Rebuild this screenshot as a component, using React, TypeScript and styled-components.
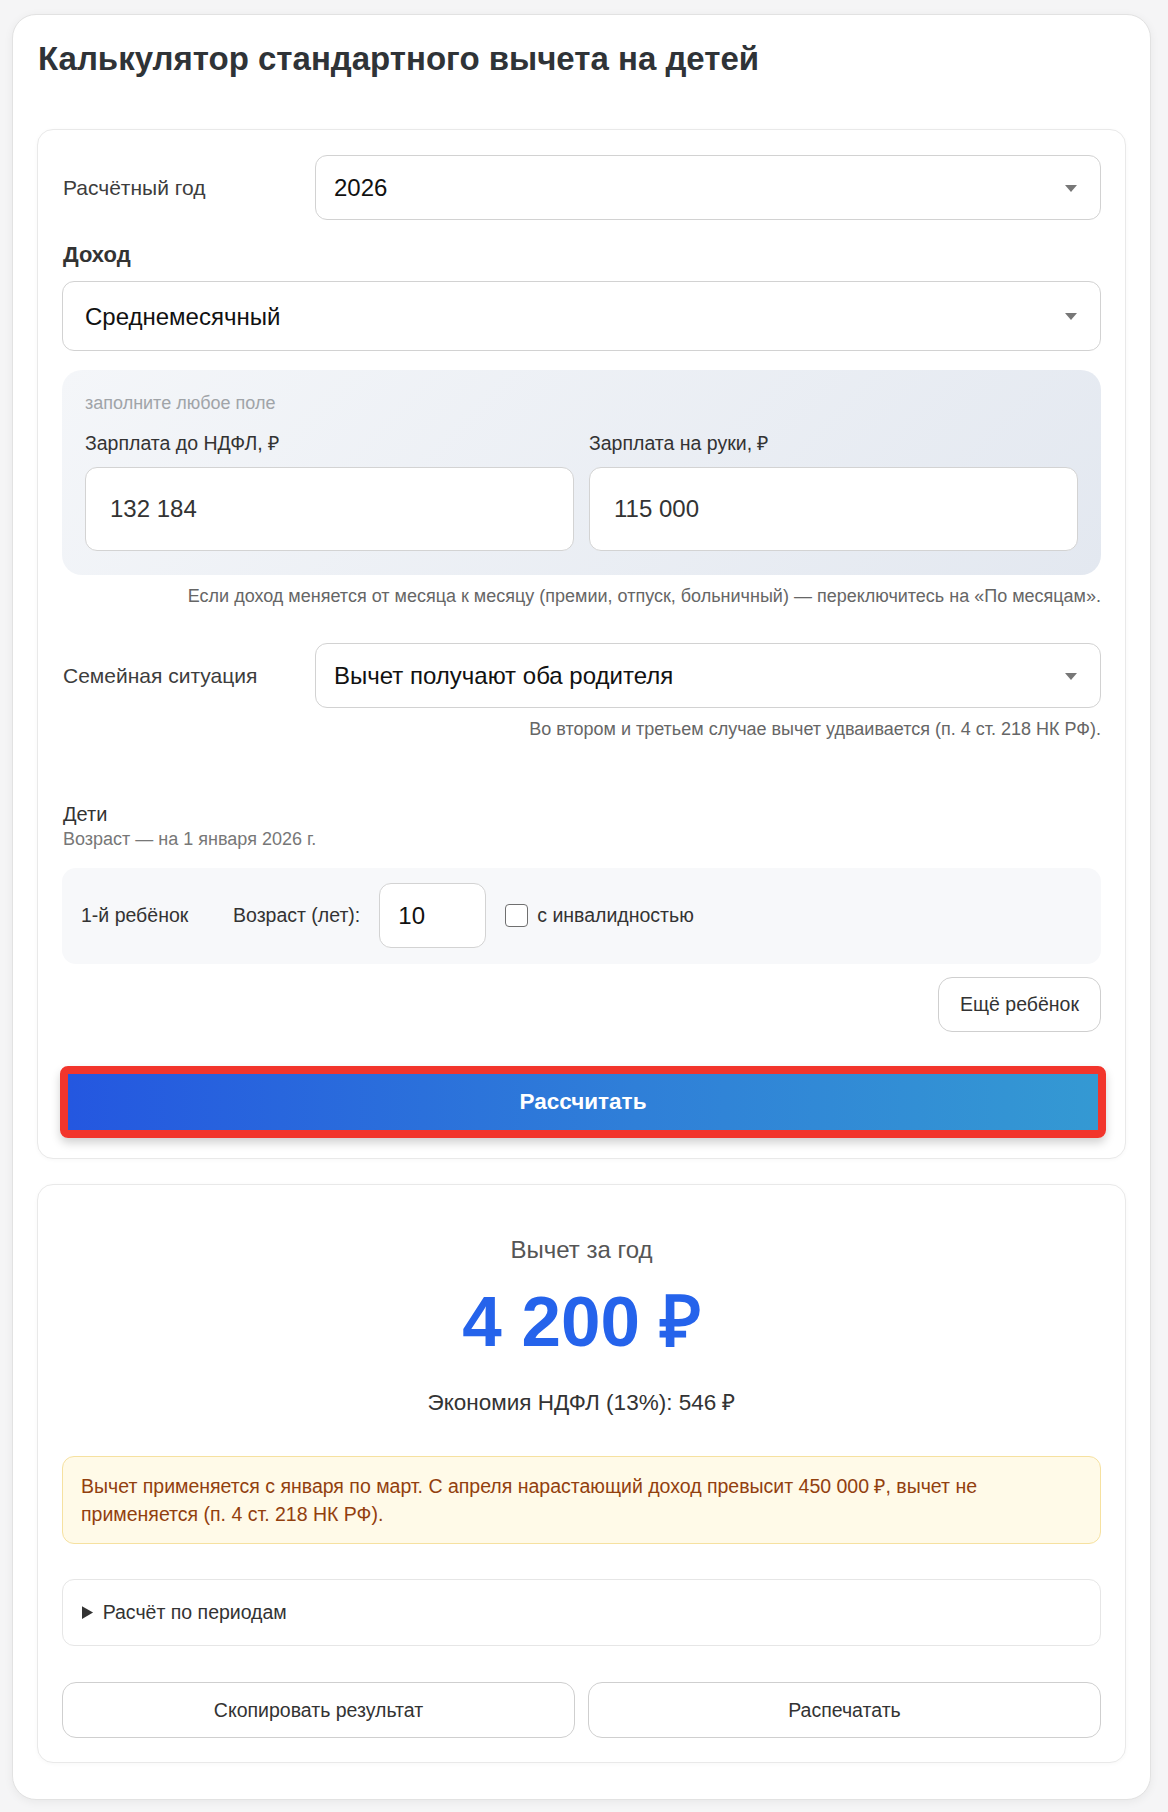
import React from 'react';
import styled, { createGlobalStyle } from 'styled-components';

const GlobalStyle = createGlobalStyle`
  html, body {
    margin: 0;
    padding: 0;
    background: #f5f5f6;
  }
  body {
    font-family: "Liberation Sans", Arial, sans-serif;
    color: #333;
  }
  * {
    box-sizing: border-box;
  }
`;

const Page = styled.div`
  padding: 14px 17px 12px 12px;
`;

const Shell = styled.div`
  background: #fff;
  border: 1px solid #e2e2e2;
  border-radius: 24px;
  box-shadow: 0 2px 10px rgba(0, 0, 0, 0.06);
  padding: 25px 24px 36px;
`;

const Title = styled.h1`
  margin: 0 0 51px 1px;
  font-size: 33px;
  line-height: 38px;
  font-weight: 700;
  color: #2f3337;
`;

const Card = styled.section<{ $result?: boolean }>`
  background: #fff;
  border: 1px solid #e9e9e9;
  border-radius: 16px;
  box-shadow: 0 1px 4px rgba(0, 0, 0, 0.03);
  padding: ${p => (p.$result ? '51px 24px 24px' : '25px 24px 20px')};
  margin-top: ${p => (p.$result ? '25px' : '0')};
`;

const FieldRow = styled.div<{ $top?: number }>`
  display: flex;
  align-items: center;
  gap: 13px;
  margin-top: ${p => p.$top ?? 0}px;
`;

const RowLabel = styled.label`
  flex: 0 0 240px;
  font-size: 21px;
  color: #3d3d3d;
  padding-left: 1px;
`;

const SelectWrap = styled.div`
  position: relative;
  flex: 1;

  &::after {
    content: '';
    position: absolute;
    right: 24px;
    top: 50%;
    margin-top: -3px;
    border-left: 6px solid transparent;
    border-right: 6px solid transparent;
    border-top: 7px solid #777;
    pointer-events: none;
  }
`;

const Select = styled.select<{ $tall?: boolean }>`
  appearance: none;
  -webkit-appearance: none;
  width: 100%;
  height: ${p => (p.$tall ? '70px' : '65px')};
  padding: 0 48px 0 ${p => (p.$tall ? '22px' : '18px')};
  border: 1px solid #d2d2d2;
  border-radius: 12px;
  background: #fff;
  font-family: inherit;
  font-size: 24px;
  color: #111;
  outline: none;
`;

const SectionTitle = styled.div`
  margin: 23px 0 15px 1px;
  font-size: 22px;
  line-height: 23px;
  font-weight: 700;
  color: #333;
`;

const SalaryPanel = styled.div`
  margin-top: 19px;
  padding: 23px 23px 24px;
  border-radius: 20px;
  background: linear-gradient(135deg, #f4f6f9 0%, #e3e8f0 100%);
`;

const PanelNote = styled.div`
  font-size: 18px;
  line-height: 21px;
  color: #a0a4a8;
  margin-bottom: 18px;
`;

const SalaryGrid = styled.div`
  display: grid;
  grid-template-columns: 1fr 1fr;
  gap: 15px;
`;

const SalaryField = styled.div`
  display: flex;
  flex-direction: column;
`;

const FieldCaption = styled.label`
  font-size: 19.5px;
  line-height: 23px;
  color: #333;
  margin-bottom: 12px;
`;

const MoneyInput = styled.input`
  height: 84px;
  width: 100%;
  padding: 0 24px;
  border: 1px solid #d3d3d3;
  border-radius: 12px;
  background: #fff;
  font-family: inherit;
  font-size: 24px;
  color: #333;
  outline: none;
`;

const Hint = styled.p`
  margin: 11px 0 0;
  text-align: right;
  font-size: 18px;
  line-height: 21px;
  color: #666;
`;

const ChildrenHead = styled.div`
  margin-top: 63px;
  padding-left: 1px;
  font-size: 20px;
  line-height: 23px;
  color: #333;
`;

const ChildrenSub = styled.div`
  margin-top: 3px;
  padding-left: 1px;
  font-size: 18px;
  line-height: 21px;
  color: #777;
`;

const ChildRow = styled.div`
  margin-top: 18px;
  display: flex;
  align-items: center;
  gap: 19px;
  padding: 15px 19px 16px;
  border-radius: 14px;
  background: #f7f8fa;
`;

const ChildName = styled.span`
  flex: 0 0 133px;
  font-size: 19.5px;
  color: #333;
`;

const AgeLabel = styled.label`
  font-size: 19.5px;
  color: #333;
`;

const AgeInput = styled.input`
  width: 107px;
  height: 65px;
  padding: 0 18px;
  border: 1px solid #d3d3d3;
  border-radius: 12px;
  background: #fff;
  font-family: inherit;
  font-size: 24px;
  color: #111;
  outline: none;
`;

const CheckLabel = styled.label`
  display: flex;
  align-items: center;
  gap: 9px;
  font-size: 19.5px;
  color: #333;
`;

const CheckBox = styled.input`
  appearance: none;
  -webkit-appearance: none;
  width: 23px;
  height: 23px;
  margin: 0;
  border: 1.5px solid #6f6f6f;
  border-radius: 4px;
  background: #fff;
`;

const AddRow = styled.div`
  margin-top: 13px;
  display: flex;
  justify-content: flex-end;
`;

const GhostButton = styled.button<{ $wide?: boolean }>`
  height: ${p => (p.$wide ? '56px' : '55px')};
  padding: 0 21px;
  border: 1px solid #cfcfcf;
  border-radius: 14px;
  background: #fff;
  font-family: inherit;
  font-size: 19.5px;
  color: #333;
  cursor: pointer;
`;

const CalcButton = styled.button`
  display: block;
  width: calc(100% + 7px);
  height: 72px;
  margin: 34px 0 0 -2px;
  border: 8px solid #f2352c;
  border-radius: 8px;
  background: linear-gradient(90deg, #2457e0 0%, #2f7fd8 55%, #3499d3 100%);
  box-shadow: 0 5px 10px rgba(0, 0, 0, 0.18);
  font-family: inherit;
  font-size: 22.5px;
  font-weight: 700;
  color: #fff;
  cursor: pointer;
`;

const ResultCaption = styled.div`
  text-align: center;
  font-size: 24px;
  line-height: 28px;
  color: #555;
`;

const ResultValue = styled.div`
  margin-top: 18px;
  text-align: center;
  font-size: 71px;
  line-height: 80px;
  font-weight: 700;
  color: #2563eb;
`;

const ResultSaving = styled.div`
  margin-top: 28px;
  text-align: center;
  font-size: 22.5px;
  line-height: 26px;
  color: #333;
`;

const Warning = styled.div`
  margin-top: 40px;
  padding: 15px 18px;
  border: 1px solid #f6e1a0;
  border-radius: 12px;
  background: #fffae8;
  font-size: 19.5px;
  line-height: 28px;
  color: #92400e;
`;

const Periods = styled.details`
  margin-top: 35px;
  border: 1px solid #e6e6e6;
  border-radius: 12px;
  background: #fff;
`;

const PeriodsSummary = styled.summary`
  padding: 20px 19px 21px;
  font-size: 19.5px;
  line-height: 24px;
  color: #333;
  cursor: pointer;
`;

const ActionGrid = styled.div`
  margin-top: 36px;
  display: grid;
  grid-template-columns: 1fr 1fr;
  gap: 13px;
`;

const App: React.FC = () => {
  return (
    <>
      <GlobalStyle />
      <Page>
        <Shell>
          <Title>Калькулятор стандартного вычета на детей</Title>

          <Card>
            <FieldRow>
              <RowLabel>Расчётный год</RowLabel>
              <SelectWrap>
                <Select defaultValue="2026">
                  <option value="2025">2025</option>
                  <option value="2026">2026</option>
                </Select>
              </SelectWrap>
            </FieldRow>

            <SectionTitle>Доход</SectionTitle>
            <SelectWrap>
              <Select $tall defaultValue="avg">
                <option value="avg">Среднемесячный</option>
                <option value="monthly">По месяцам</option>
              </Select>
            </SelectWrap>

            <SalaryPanel>
              <PanelNote>заполните любое поле</PanelNote>
              <SalaryGrid>
                <SalaryField>
                  <FieldCaption>Зарплата до НДФЛ, ₽</FieldCaption>
                  <MoneyInput defaultValue="132 184" />
                </SalaryField>
                <SalaryField>
                  <FieldCaption>Зарплата на руки, ₽</FieldCaption>
                  <MoneyInput defaultValue="115 000" />
                </SalaryField>
              </SalaryGrid>
            </SalaryPanel>
            <Hint>
              Если доход меняется от месяца к месяцу (премии, отпуск, больничный) — переключитесь на «По месяцам».
            </Hint>

            <FieldRow $top={36}>
              <RowLabel>Семейная ситуация</RowLabel>
              <SelectWrap>
                <Select defaultValue="both">
                  <option value="both">Вычет получают оба родителя</option>
                  <option value="single">Единственный родитель</option>
                  <option value="refuse">Второй родитель отказался от вычета</option>
                </Select>
              </SelectWrap>
            </FieldRow>
            <Hint>Во втором и третьем случае вычет удваивается (п. 4 ст. 218 НК РФ).</Hint>

            <ChildrenHead>Дети</ChildrenHead>
            <ChildrenSub>Возраст — на 1 января 2026 г.</ChildrenSub>

            <ChildRow>
              <ChildName>1-й ребёнок</ChildName>
              <AgeLabel>Возраст (лет):</AgeLabel>
              <AgeInput defaultValue="10" />
              <CheckLabel>
                <CheckBox type="checkbox" />
                с инвалидностью
              </CheckLabel>
            </ChildRow>

            <AddRow>
              <GhostButton type="button">Ещё ребёнок</GhostButton>
            </AddRow>

            <CalcButton type="button">Рассчитать</CalcButton>
          </Card>

          <Card $result>
            <ResultCaption>Вычет за год</ResultCaption>
            <ResultValue>4 200 ₽</ResultValue>
            <ResultSaving>Экономия НДФЛ (13%): 546 ₽</ResultSaving>

            <Warning>
              Вычет применяется с января по март. С апреля нарастающий доход превысит 450 000 ₽, вычет не
              применяется (п. 4 ст. 218 НК РФ).
            </Warning>

            <Periods>
              <PeriodsSummary>Расчёт по периодам</PeriodsSummary>
            </Periods>

            <ActionGrid>
              <GhostButton $wide type="button">Скопировать результат</GhostButton>
              <GhostButton $wide type="button">Распечатать</GhostButton>
            </ActionGrid>
          </Card>
        </Shell>
      </Page>
    </>
  );
};

export default App;
